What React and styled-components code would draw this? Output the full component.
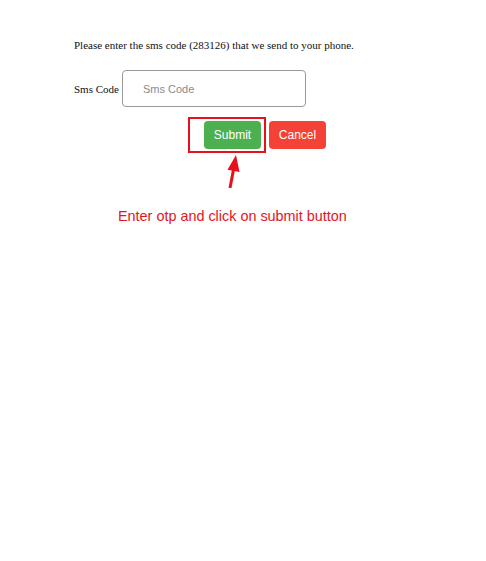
import React, { useState } from 'react';
import styled, { createGlobalStyle } from 'styled-components';

const GlobalStyle = createGlobalStyle`
  body {
    margin: 0;
    background: #fff;
  }
`;

const Page = styled.div`
  padding: 39px 0 0 74px;
`;

const Intro = styled.p`
  margin: 0 0 18px;
  font-family: "Liberation Serif", "Times New Roman", serif;
  font-size: 11px;
  line-height: 13px;
  color: #111;
`;

const FieldRow = styled.div`
  display: flex;
  align-items: center;
  gap: 3px;
`;

const Label = styled.label`
  font-family: "Liberation Serif", "Times New Roman", serif;
  font-size: 11px;
  color: #111;
`;

const CodeInput = styled.input`
  box-sizing: border-box;
  width: 184px;
  height: 37px;
  padding: 0 20px;
  border: 1px solid #9a9a9a;
  border-radius: 4px;
  font-family: "Liberation Sans", Arial, sans-serif;
  font-size: 11px;
  color: #333;
  outline: none;

  &::placeholder {
    color: #8a8a8a;
  }
`;

const Actions = styled.div`
  display: flex;
  align-items: center;
  gap: 3px;
  margin: 10px 0 0 114px;
`;

const Highlight = styled.div`
  display: flex;
  padding: 2px 3px 2px 14px;
  border: 2px solid #e8101a;
`;

const Button = styled.button`
  width: 57px;
  height: 28px;
  padding: 0;
  border: none;
  border-radius: 4px;
  background: ${(p) => (p.$variant === 'cancel' ? '#f44336' : '#4caf50')};
  color: #fff;
  font-family: "Liberation Sans", Arial, sans-serif;
  font-size: 12px;
  cursor: pointer;
`;

const Arrow = styled.svg`
  display: block;
  margin-left: 141px;
`;

const Note = styled.div`
  margin: 20px 0 0 44px;
  font-family: "Liberation Sans", Arial, sans-serif;
  font-size: 14.4px;
  line-height: 16px;
  color: #e4141b;
`;

const App = () => {
  const [code, setCode] = useState('');

  return (
    <Page>
      <GlobalStyle />
      <Intro>Please enter the sms code (283126) that we send to your phone.</Intro>

      <FieldRow>
        <Label htmlFor="sms">Sms Code</Label>
        <CodeInput
          id="sms"
          type="text"
          placeholder="Sms Code"
          value={code}
          onChange={(e) => setCode(e.target.value)}
        />
      </FieldRow>

      <Actions>
        <Highlight>
          <Button>Submit</Button>
        </Highlight>
        <Button $variant="cancel">Cancel</Button>
      </Actions>

      {/* annotation arrow pointing at submit */}
      <Arrow width="30" height="35" viewBox="0 0 30 35">
        <line x1="15" y1="35" x2="18.6" y2="16" stroke="#e8101a" strokeWidth="3" />
        <polygon points="21,2 12.5,16.8 24.5,19" fill="#e8101a" />
      </Arrow>

      <Note>Enter otp and click on submit button</Note>
    </Page>
  );
};

export default App;
